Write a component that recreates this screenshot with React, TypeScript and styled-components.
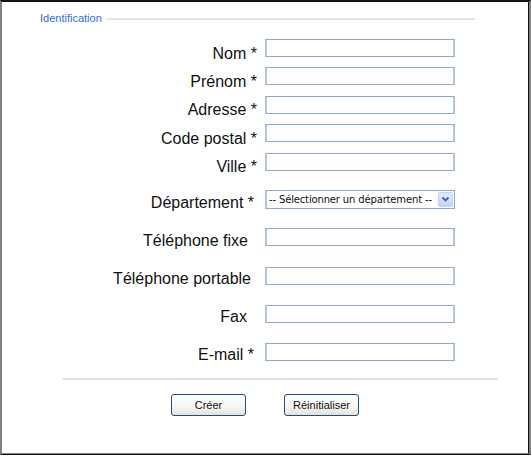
import React from "react";
import styled, { createGlobalStyle } from "styled-components";

const Global = createGlobalStyle`
  html, body { margin: 0; padding: 0; background: #fff; }
  body { font-family: "Liberation Sans", Arial, sans-serif; }
`;

const Frame = styled.div`
  box-sizing: border-box;
  width: 531px;
  height: 455px;
  border-left: 2px solid #808080;
  border-top: 2px solid #111;
  border-right: 2px solid #808080;
  border-bottom: 1px solid #111;
  background: #fff;
`;

const Inner = styled.div`
  box-sizing: border-box;
  height: 100%;
  border-right: 1px solid #111;
  border-bottom: 1px solid #808080;
  padding-top: 10px;
`;

const LegendRow = styled.div`
  display: flex;
  align-items: center;
  padding-left: 38px;
  height: 13px;
`;

const LegendText = styled.span`
  font-size: 11px;
  line-height: 13px;
  color: #2f6fdc;
`;

const LegendLine = styled.div`
  margin-left: 5px;
  width: 368px;
  height: 2px;
  background: #e6e5d8;
  margin-top: 1px;
`;

const Form = styled.div`
  display: flex;
  flex-direction: column;
`;

const Row = styled.div<{ $mt: number; $h: number }>`
  display: flex;
  align-items: flex-start;
  height: ${(p) => p.$h}px;
  margin-top: ${(p) => p.$mt}px;
`;

const Label = styled.label<{ $pad: number; $pt: number }>`
  box-sizing: border-box;
  width: 255px;
  text-align: right;
  padding-right: ${(p) => p.$pad}px;
  padding-top: ${(p) => p.$pt}px;
  font-size: 16px;
  line-height: 18px;
  color: #111;
  white-space: nowrap;
`;

const Input = styled.input`
  box-sizing: border-box;
  margin: 0 0 0 8px;
  width: 190px;
  height: 18px;
  border-top: 1px solid #8ea8c8;
  border-bottom: 1px solid #8ea8c8;
  border-left: 2px solid #b3c5dc;
  border-right: 2px solid #b3c5dc;
  background: #fff;
  padding: 0 2px;
  outline: none;
`;

const SelectBox = styled.div`
  box-sizing: border-box;
  margin-left: 8px;
  width: 190px;
  height: 19px;
  display: flex;
  align-items: center;
  border: 1px solid #8ea8c8;
  border-left-width: 2px;
  border-left-color: #b3c5dc;
  background: #fff;
  padding-right: 1px;
`;

const Select = styled.select`
  flex: 1;
  min-width: 0;
  appearance: none;
  -webkit-appearance: none;
  border: none;
  outline: none;
  background: transparent;
  font-family: "DejaVu Sans", Tahoma, sans-serif;
  font-size: 10px;
  letter-spacing: -0.15px;
  color: #111;
  padding: 0 0 0 2px;
  height: 16px;
`;

const ArrowBtn = styled.span`
  box-sizing: border-box;
  width: 15px;
  height: 15px;
  display: flex;
  align-items: center;
  justify-content: center;
  border: 1px solid #c3d3fb;
  border-radius: 2px;
  background: linear-gradient(#e3ebff, #c4d4fa);
`;

const Rule = styled.div`
  margin-top: 17px;
  margin-left: 61px;
  width: 435px;
  height: 2px;
  background: #e2e0d8;
`;

const Buttons = styled.div`
  display: flex;
  gap: 38px;
  margin-top: 14px;
  padding-left: 169px;
`;

const Button = styled.button`
  box-sizing: border-box;
  width: 75px;
  height: 22px;
  border: 1px solid #1c4f82;
  border-radius: 3px;
  background: linear-gradient(#ffffff 0%, #f6f6f2 60%, #e4e2da 100%);
  font-family: "Liberation Sans", Tahoma, sans-serif;
  font-size: 11px;
  color: #111;
  padding: 0;
  cursor: pointer;
`;

type Field = {
  label: string;
  mt: number;
  pad: number;
  pt: number;
  select?: boolean;
};

const fields: Field[] = [
  { label: "Nom *", mt: 14, pad: 0, pt: 5.5 },
  { label: "Prénom *", mt: 10.4, pad: 0, pt: 5.5 },
  { label: "Adresse *", mt: 10.4, pad: 0, pt: 5.5 },
  { label: "Code postal *", mt: 10.4, pad: 0, pt: 5.5 },
  { label: "Ville *", mt: 10.4, pad: 0, pt: 5.5 },
  { label: "Département *", mt: 19.4, pad: 3, pt: 4, select: true },
  { label: "Téléphone fixe", mt: 19.3, pad: 9, pt: 3.5 },
  { label: "Téléphone portable", mt: 20.3, pad: 6, pt: 3.5 },
  { label: "Fax", mt: 20, pad: 10, pt: 3.5 },
  { label: "E-mail *", mt: 20.2, pad: 3, pt: 3.5 },
];

const Chevron = () => (
  <svg width="9" height="7" viewBox="0 0 9 7">
    <path d="M1.5 1.5 L4.5 4.5 L7.5 1.5" fill="none" stroke="#4a5f8c" strokeWidth="1.8" />
  </svg>
);

export default function App() {
  return (
    <>
      <Global />
      <Frame>
        <Inner>
          <LegendRow>
            <LegendText>Identification</LegendText>
            <LegendLine />
          </LegendRow>
          <Form>
            {fields.map((f) => (
              <Row key={f.label} $mt={f.mt} $h={f.select ? 19 : 18}>
                <Label $pad={f.pad} $pt={f.pt}>
                  {f.label}
                </Label>
                {f.select ? (
                  <SelectBox>
                    <Select defaultValue="">
                      <option value="">-- Sélectionner un département --</option>
                    </Select>
                    <ArrowBtn>
                      <Chevron />
                    </ArrowBtn>
                  </SelectBox>
                ) : (
                  <Input type="text" />
                )}
              </Row>
            ))}
          </Form>
          <Rule />
          <Buttons>
            <Button type="button">Créer</Button>
            <Button type="button">Réinitialiser</Button>
          </Buttons>
        </Inner>
      </Frame>
    </>
  );
}
